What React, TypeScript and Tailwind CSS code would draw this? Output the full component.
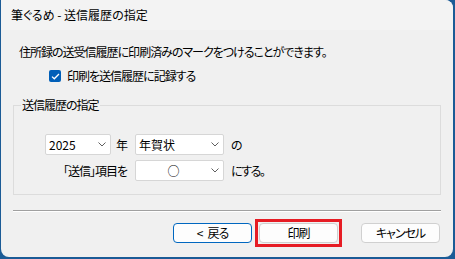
import React from 'react'

const font = "font-['Noto_Sans_CJK_JP','Noto_Sans',sans-serif] [font-feature-settings:'palt']"

function Chevron() {
  return (
    <svg width="8" height="5" viewBox="0 0 8 5" className="shrink-0">
      <path d="M0.5 0.5 L4 4 L7.5 0.5" fill="none" stroke="#5f5f5f" strokeWidth="1" />
    </svg>
  )
}

function Select({ value, width, center }: { value: string; width: string; center?: boolean }) {
  return (
    <div className={`flex h-[21px] ${width} items-center rounded-[2px] border border-[#d6d6d6] bg-white pr-[4px]`}>
      <span className={`flex-1 ${center ? 'text-center' : 'pl-[3px]'}`}>{value}</span>
      <Chevron />
    </div>
  )
}

function Button({ children, primary, marked }: { children: React.ReactNode; primary?: boolean; marked?: boolean }) {
  return (
    <button
      className={`relative h-[20px] w-[79px] rounded-[4px] border bg-[#fdfdfd] text-[12px] leading-none tracking-[-1px] text-black ${
        primary ? 'border-[#0067c0]' : 'border-[#d0d0d0]'
      }`}
    >
      {children}
      {marked ? <span className="pointer-events-none absolute -inset-[5px] border-[3px] border-[#e61c24]" /> : null}
    </button>
  )
}

export default function App() {
  return (
    <div className={`h-[259px] w-[455px] bg-[#1b5b96] pb-[2px] pl-px pr-[2px] text-[12px] text-black ${font}`}>
      <div className="flex h-full flex-col overflow-hidden rounded-b-[8px] rounded-tr-[8px] bg-[#f0f0f0]">
        <div className="flex h-[30px] shrink-0 items-center bg-[#f3f3f3] pl-[10px]">筆ぐるめ - 送信履歴の指定</div>

        <div className="flex flex-1 flex-col px-[12px]">
          <p className="mt-[14px] pl-[6px] leading-[16px] tracking-[-1px]">
            住所録の送受信履歴に印刷済みのマークをつけることができます。
          </p>

          <label className="mt-[8px] flex items-center gap-[6px] pl-[36px] leading-[16px] tracking-[-1px]">
            <span className="flex h-[12px] w-[12px] items-center justify-center rounded-[2px] bg-[#005fb8]">
              <svg width="9" height="7" viewBox="0 0 9 7">
                <path d="M1 3.6 L3.3 5.8 L8 1" fill="none" stroke="white" strokeWidth="1.3" />
              </svg>
            </span>
            印刷を送信履歴に記録する
          </label>

          <div className="relative mt-[21px] flex h-[90px] flex-col gap-[5px] border border-[#dcdcdc] pl-[31px] pt-[28px]">
            <span className="absolute -top-[9px] left-[7px] bg-[#f0f0f0] px-px leading-[16px] tracking-[-1px]">
              送信履歴の指定
            </span>

            <div className="flex items-center gap-[7px]">
              <div className="flex w-[83px] items-center justify-between">
                <Select value="2025" width="w-[66px]" />
                <span>年</span>
              </div>
              <Select value="年賀状" width="w-[89px]" />
              <span>の</span>
            </div>

            <div className="flex items-center gap-[7px]">
              <div className="flex w-[83px] justify-end pr-px tracking-[-1px]">「送信」項目を</div>
              <Select value="○" width="w-[89px]" center />
              <span className="tracking-[-1.5px]">にする。</span>
            </div>
          </div>

          <div className="mt-[15px] border-b border-t border-b-white border-t-[#a0a0a0]" />

          <div className="mt-[11px] flex justify-end pr-px">
            <div className="flex gap-[7px]">
              <Button primary>
                &lt;<span className="ml-[5px]">戻る</span>
              </Button>
              <Button marked>印刷</Button>
            </div>
            <div className="ml-[23px]">
              <Button>キャンセル</Button>
            </div>
          </div>
        </div>
      </div>
    </div>
  )
}
